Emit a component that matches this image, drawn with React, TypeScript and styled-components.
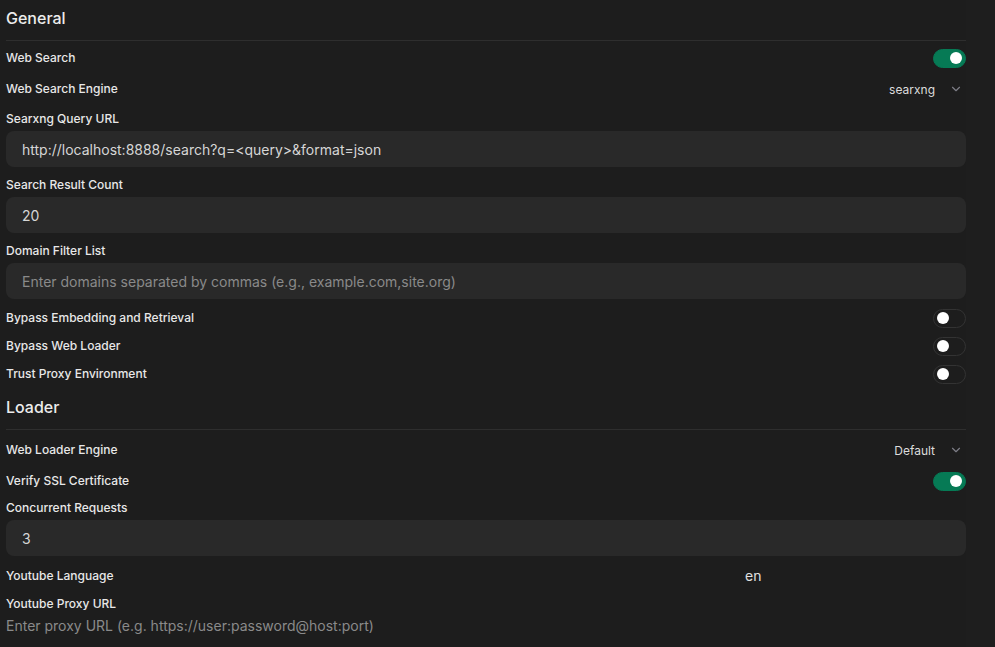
import React from "react";
import styled, { createGlobalStyle } from "styled-components";

const Global = createGlobalStyle`
  html, body { margin: 0; padding: 0; background: #1d1d1d; }
  body { font-family: Inter, "Noto Sans", "Liberation Sans", sans-serif; color: #ececec; }
  * { box-sizing: border-box; }
`;

const Page = styled.div`
  display: flex;
  width: 995px;
  height: 647px;
  overflow: hidden;
  background: #1d1d1d;
`;

const Main = styled.div`
  width: 966px;
  padding: 6px 0 0 6px;
  display: flex;
  flex-direction: column;
`;

const Gutter = styled.div`
  flex: 1;
  background: #1e1e1e;
`;

const Section = styled.section<{ $mb?: number }>`
  display: flex;
  flex-direction: column;
  margin-bottom: ${(p) => p.$mb ?? 0}px;
`;

const Heading = styled.div`
  font-size: 16px;
  line-height: 24px;
  font-weight: 500;
  color: #ececec;
  margin-bottom: 10px;
`;

const Rule = styled.hr`
  border: 0;
  border-top: 1px solid #2e2e2e;
  margin: 0 0 8px 0;
  height: 0;
`;

const Row = styled.div<{ $h?: number; $mb?: number }>`
  display: flex;
  align-items: center;
  justify-content: space-between;
  height: ${(p) => p.$h ?? 18}px;
  margin-bottom: ${(p) => p.$mb ?? 10}px;
`;

const Label = styled.div<{ $mb?: number }>`
  font-size: 12px;
  line-height: 16px;
  font-weight: 500;
  color: #e8e8e8;
  margin-bottom: ${(p) => p.$mb ?? 0}px;
`;

const Field = styled.div<{ $placeholder?: boolean; $mb?: number }>`
  height: 36px;
  border-radius: 8px;
  background: #292929;
  padding: 0 16px;
  display: flex;
  align-items: center;
  font-size: 14px;
  color: ${(p) => (p.$placeholder ? "#8a8a8a" : "#d6d6d6")};
  margin-bottom: ${(p) => p.$mb ?? 10}px;
`;

const Toggle = styled.div<{ $on?: boolean }>`
  width: 33px;
  height: 19px;
  border-radius: 10px;
  padding: 0 3px;
  display: flex;
  align-items: center;
  justify-content: ${(p) => (p.$on ? "flex-end" : "flex-start")};
  background: ${(p) => (p.$on ? "#067a55" : "transparent")};
  border: 1px solid ${(p) => (p.$on ? "#067a55" : "#333333")};
  &::after {
    content: "";
    width: 12px;
    height: 12px;
    border-radius: 50%;
    background: #ffffff;
  }
`;

const Select = styled.div`
  display: flex;
  align-items: center;
  gap: 14px;
  font-size: 12px;
  color: #dcdcdc;
  padding-right: 3px;
`;

const InlineValue = styled.div`
  width: 221px;
  font-size: 14px;
  line-height: 20px;
  color: #e0e0e0;
`;

const PlainPlaceholder = styled.div`
  font-size: 14px;
  line-height: 20px;
  color: #8a8a8a;
  margin-top: 4px;
`;

const Chevron = () => (
  <svg width="14" height="14" viewBox="0 0 24 24" fill="none" stroke="#7d7d86" strokeWidth="2" strokeLinecap="round" strokeLinejoin="round">
    <path d="M6 9l6 6 6-6" />
  </svg>
);

export default function App() {
  return (
    <>
      <Global />
      <Page>
        <Main>
          <Section $mb={12}>
            <Heading>General</Heading>
            <Rule />
            <Row $mb={11}>
              <Label>Web Search</Label>
              <Toggle $on />
            </Row>
            <Row $h={22} $mb={11}>
              <Label>Web Search Engine</Label>
              <Select>
                searxng
                <Chevron />
              </Select>
            </Row>
            <Label $mb={4}>Searxng Query URL</Label>
            <Field>http://localhost:8888/search?q=&lt;query&gt;&amp;format=json</Field>
            <Label $mb={4}>Search Result Count</Label>
            <Field>20</Field>
            <Label $mb={4}>Domain Filter List</Label>
            <Field $placeholder>
              Enter domains separated by commas (e.g., example.com,site.org)
            </Field>
            <Row>
              <Label>Bypass Embedding and Retrieval</Label>
              <Toggle />
            </Row>
            <Row>
              <Label>Bypass Web Loader</Label>
              <Toggle />
            </Row>
            <Row $mb={0}>
              <Label>Trust Proxy Environment</Label>
              <Toggle />
            </Row>
          </Section>
          <Section>
            <Heading>Loader</Heading>
            <Rule />
            <Row $h={24} $mb={10}>
              <Label>Web Loader Engine</Label>
              <Select>
                Default
                <Chevron />
              </Select>
            </Row>
            <Row $mb={10}>
              <Label>Verify SSL Certificate</Label>
              <Toggle $on />
            </Row>
            <Label $mb={4}>Concurrent Requests</Label>
            <Field>3</Field>
            <Row $h={20} $mb={10}>
              <Label>Youtube Language</Label>
              <InlineValue>en</InlineValue>
            </Row>
            <Label>Youtube Proxy URL</Label>
            <PlainPlaceholder>Enter proxy URL (e.g. https://user:password@host:port)</PlainPlaceholder>
          </Section>
        </Main>
        <Gutter />
      </Page>
    </>
  );
}
